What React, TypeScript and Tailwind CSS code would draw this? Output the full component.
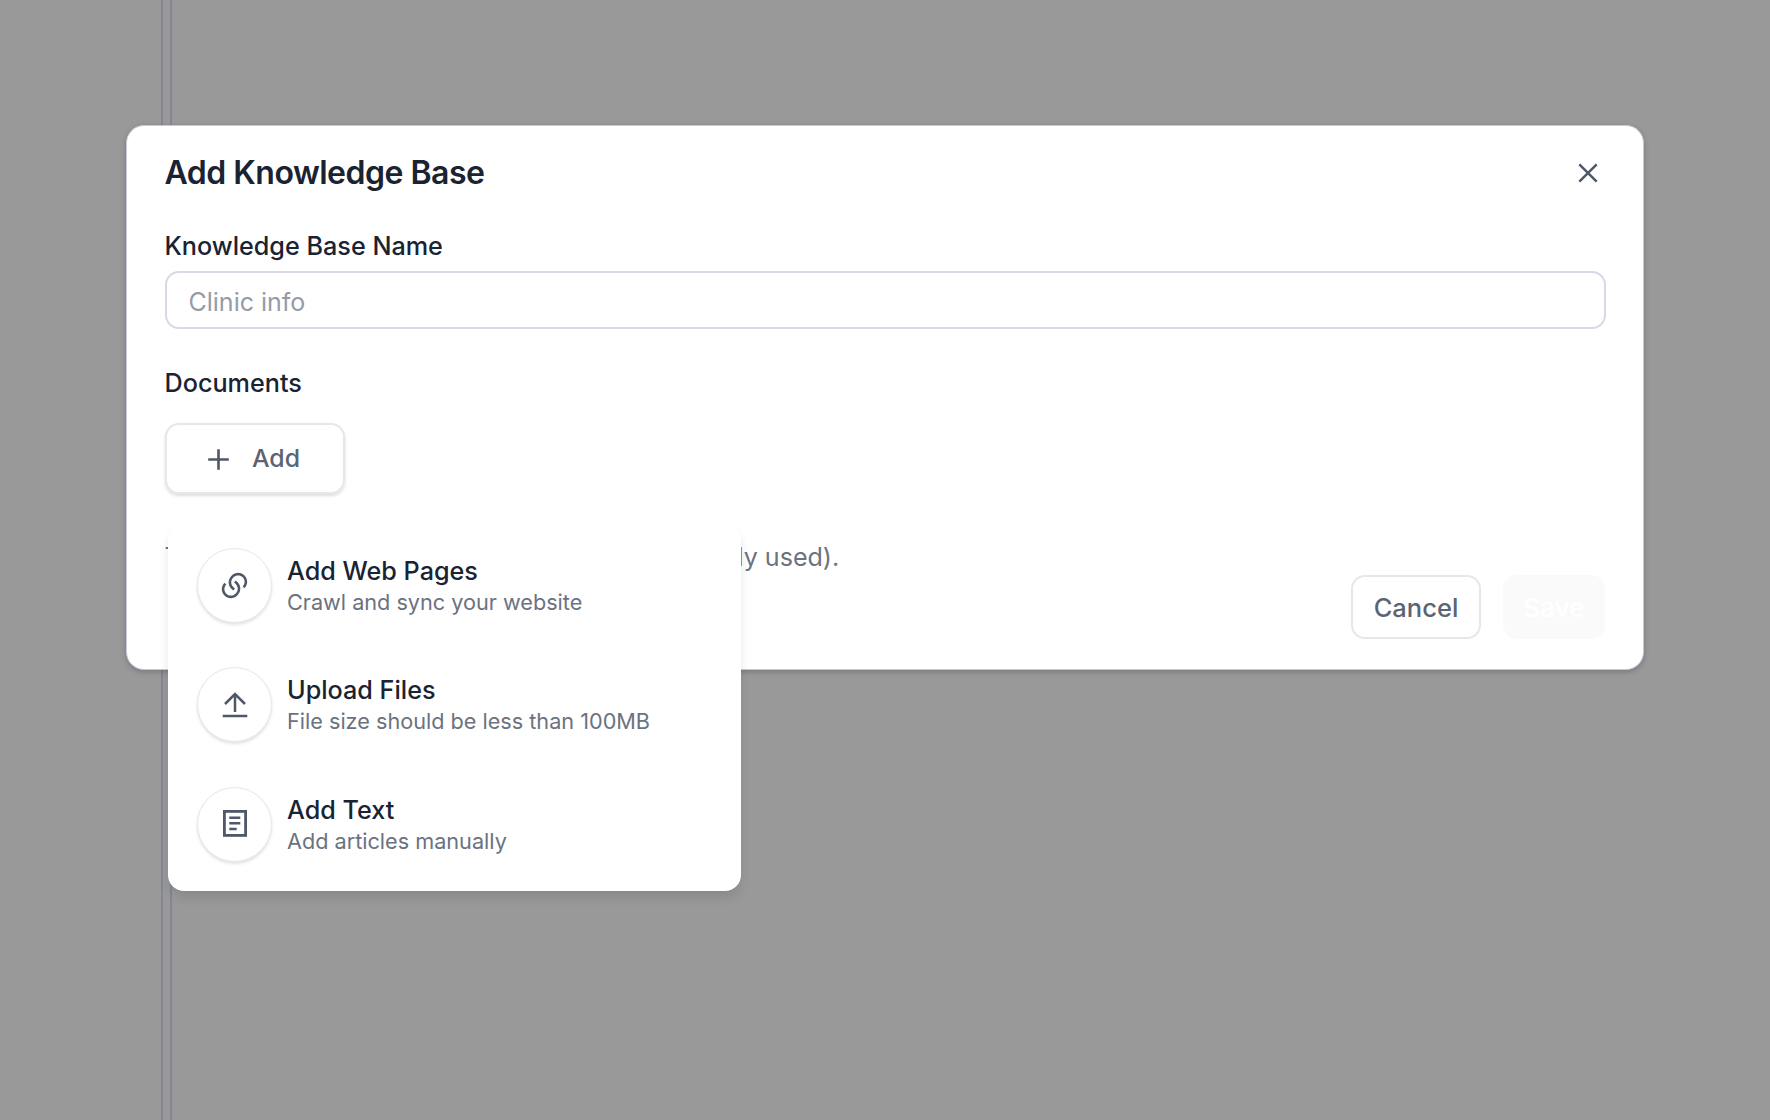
import React from "react";
import { RiLinksLine } from "react-icons/ri";

const font = { fontFamily: "Inter, sans-serif" };

function UploadIcon() {
  return (
    <svg viewBox="0 0 30 30" className="w-[30px] h-[30px]" fill="none" stroke="#4f5868" strokeWidth="2.5">
      <path d="M2.7 26h24.6" />
      <path d="M15 22V4M5 14 15 4 25 14" />
    </svg>
  );
}

function TextIcon() {
  return (
    <svg viewBox="0 0 30 30" className="w-[30px] h-[30px]" fill="none" stroke="#4f5868" strokeWidth="2.8">
      <rect x="4.4" y="2.4" width="21.2" height="24" />
      <path strokeWidth="2.4" d="M9.3 8.7h11M9.3 14.3h11M9.3 20h7.4" />
    </svg>
  );
}

function MenuItem({ icon, title, sub }: { icon: React.ReactNode; title: string; sub: string }) {
  return (
    <div className="flex items-center gap-[15px] h-[119.5px] px-[29px]">
      <div className="w-[75px] h-[75px] rounded-full bg-white border border-[#e5e7eb] shadow-[0_2px_3px_rgba(16,24,40,0.12)] flex items-center justify-center shrink-0">
        {icon}
      </div>
      <div className="flex flex-col pt-[3px]">
        <div className="text-[25.2px] leading-[31px] font-medium text-[#1a2332]">{title}</div>
        <div className="text-[21.65px] leading-[31px] text-[#6b7280]">{sub}</div>
      </div>
    </div>
  );
}

export default function App() {
  return (
    <div className="relative h-[1120px] w-full overflow-hidden bg-[#999999]" style={font}>
      <div className="flex h-full">
        <div className="w-[161px] h-full" />
        <div className="w-[11px] h-full border-x-2 border-[#85859a]" />
      </div>
      <div className="absolute left-[126px] top-[125px] w-[1518px] h-[545px] rounded-[18px] bg-white border border-[#c9c9d6] shadow-[0_2px_5px_rgba(60,60,90,0.35)] pl-[37.5px] pr-[37px] pt-[23px]">
        <div className="flex items-center justify-between h-[48px]">
          <div className="text-[32px] font-semibold tracking-[-0.5px] text-[#1a2332]">Add Knowledge Base</div>
          <svg viewBox="0 0 24 24" className="w-[32px] h-[32px] mr-[2px]" fill="none" stroke="#4f5868" strokeWidth="1.9">
            <path d="M5.5 5.5l13 13M18.5 5.5l-13 13" />
          </svg>
        </div>
        <div className="mt-[33px] text-[25.2px] leading-[32px] font-medium text-[#1a2332]">Knowledge Base Name</div>
        <div className="mt-[9px] h-[58px] rounded-[14px] border-2 border-[#d8d9e6] flex items-center px-[22px] pt-[5px] text-[25px] text-[#949ba8]">Clinic info</div>
        <div className="mt-[38px] text-[25.2px] leading-[32px] font-medium text-[#1a2332]">Documents</div>
        <div className="mt-[24px] w-[180px] h-[71px] rounded-[14px] border-2 border-[#e5e7eb] shadow-[0_2px_3px_rgba(16,24,40,0.15)] flex items-center justify-center gap-[17px] pr-[7px] pt-[1px] text-[24.8px] font-medium text-[#5b6472]">
          <svg viewBox="0 0 24 24" className="w-[33px] h-[33px]" fill="none" stroke="#4f5868" strokeWidth="1.9">
            <path d="M12 4.5v15M4.5 12h15" />
          </svg>
          <span>Add</span>
        </div>
        <div className="mt-[47px] text-[25.05px] leading-[32px] text-[#6b7280]">Total storage: 0 B of 100 MB (0% of total currently used).</div>
        <div className="absolute right-[38px] bottom-[30px] flex gap-[22px]">
          <div className="w-[130px] h-[64px] rounded-[14px] border-2 border-[#e5e7eb] flex items-center justify-center pt-[2px] text-[25.5px] font-medium text-[#5b6472]">Cancel</div>
          <div className="w-[102px] h-[64px] rounded-[14px] bg-[#fafafb] flex items-center justify-center text-[26px] font-medium text-white">Save</div>
        </div>
      </div>
      <div className="absolute left-[168px] top-[525px] w-[572.5px] h-[366px] rounded-[16px] bg-white shadow-[0_7px_12px_-2px_rgba(16,24,40,0.15)] flex flex-col justify-end pb-[7px]">
        <MenuItem icon={<RiLinksLine size={31} color="#4f5868" />} title="Add Web Pages" sub="Crawl and sync your website" />
        <MenuItem icon={<UploadIcon />} title="Upload Files" sub="File size should be less than 100MB" />
        <MenuItem icon={<TextIcon />} title="Add Text" sub="Add articles manually" />
      </div>
    </div>
  );
}
